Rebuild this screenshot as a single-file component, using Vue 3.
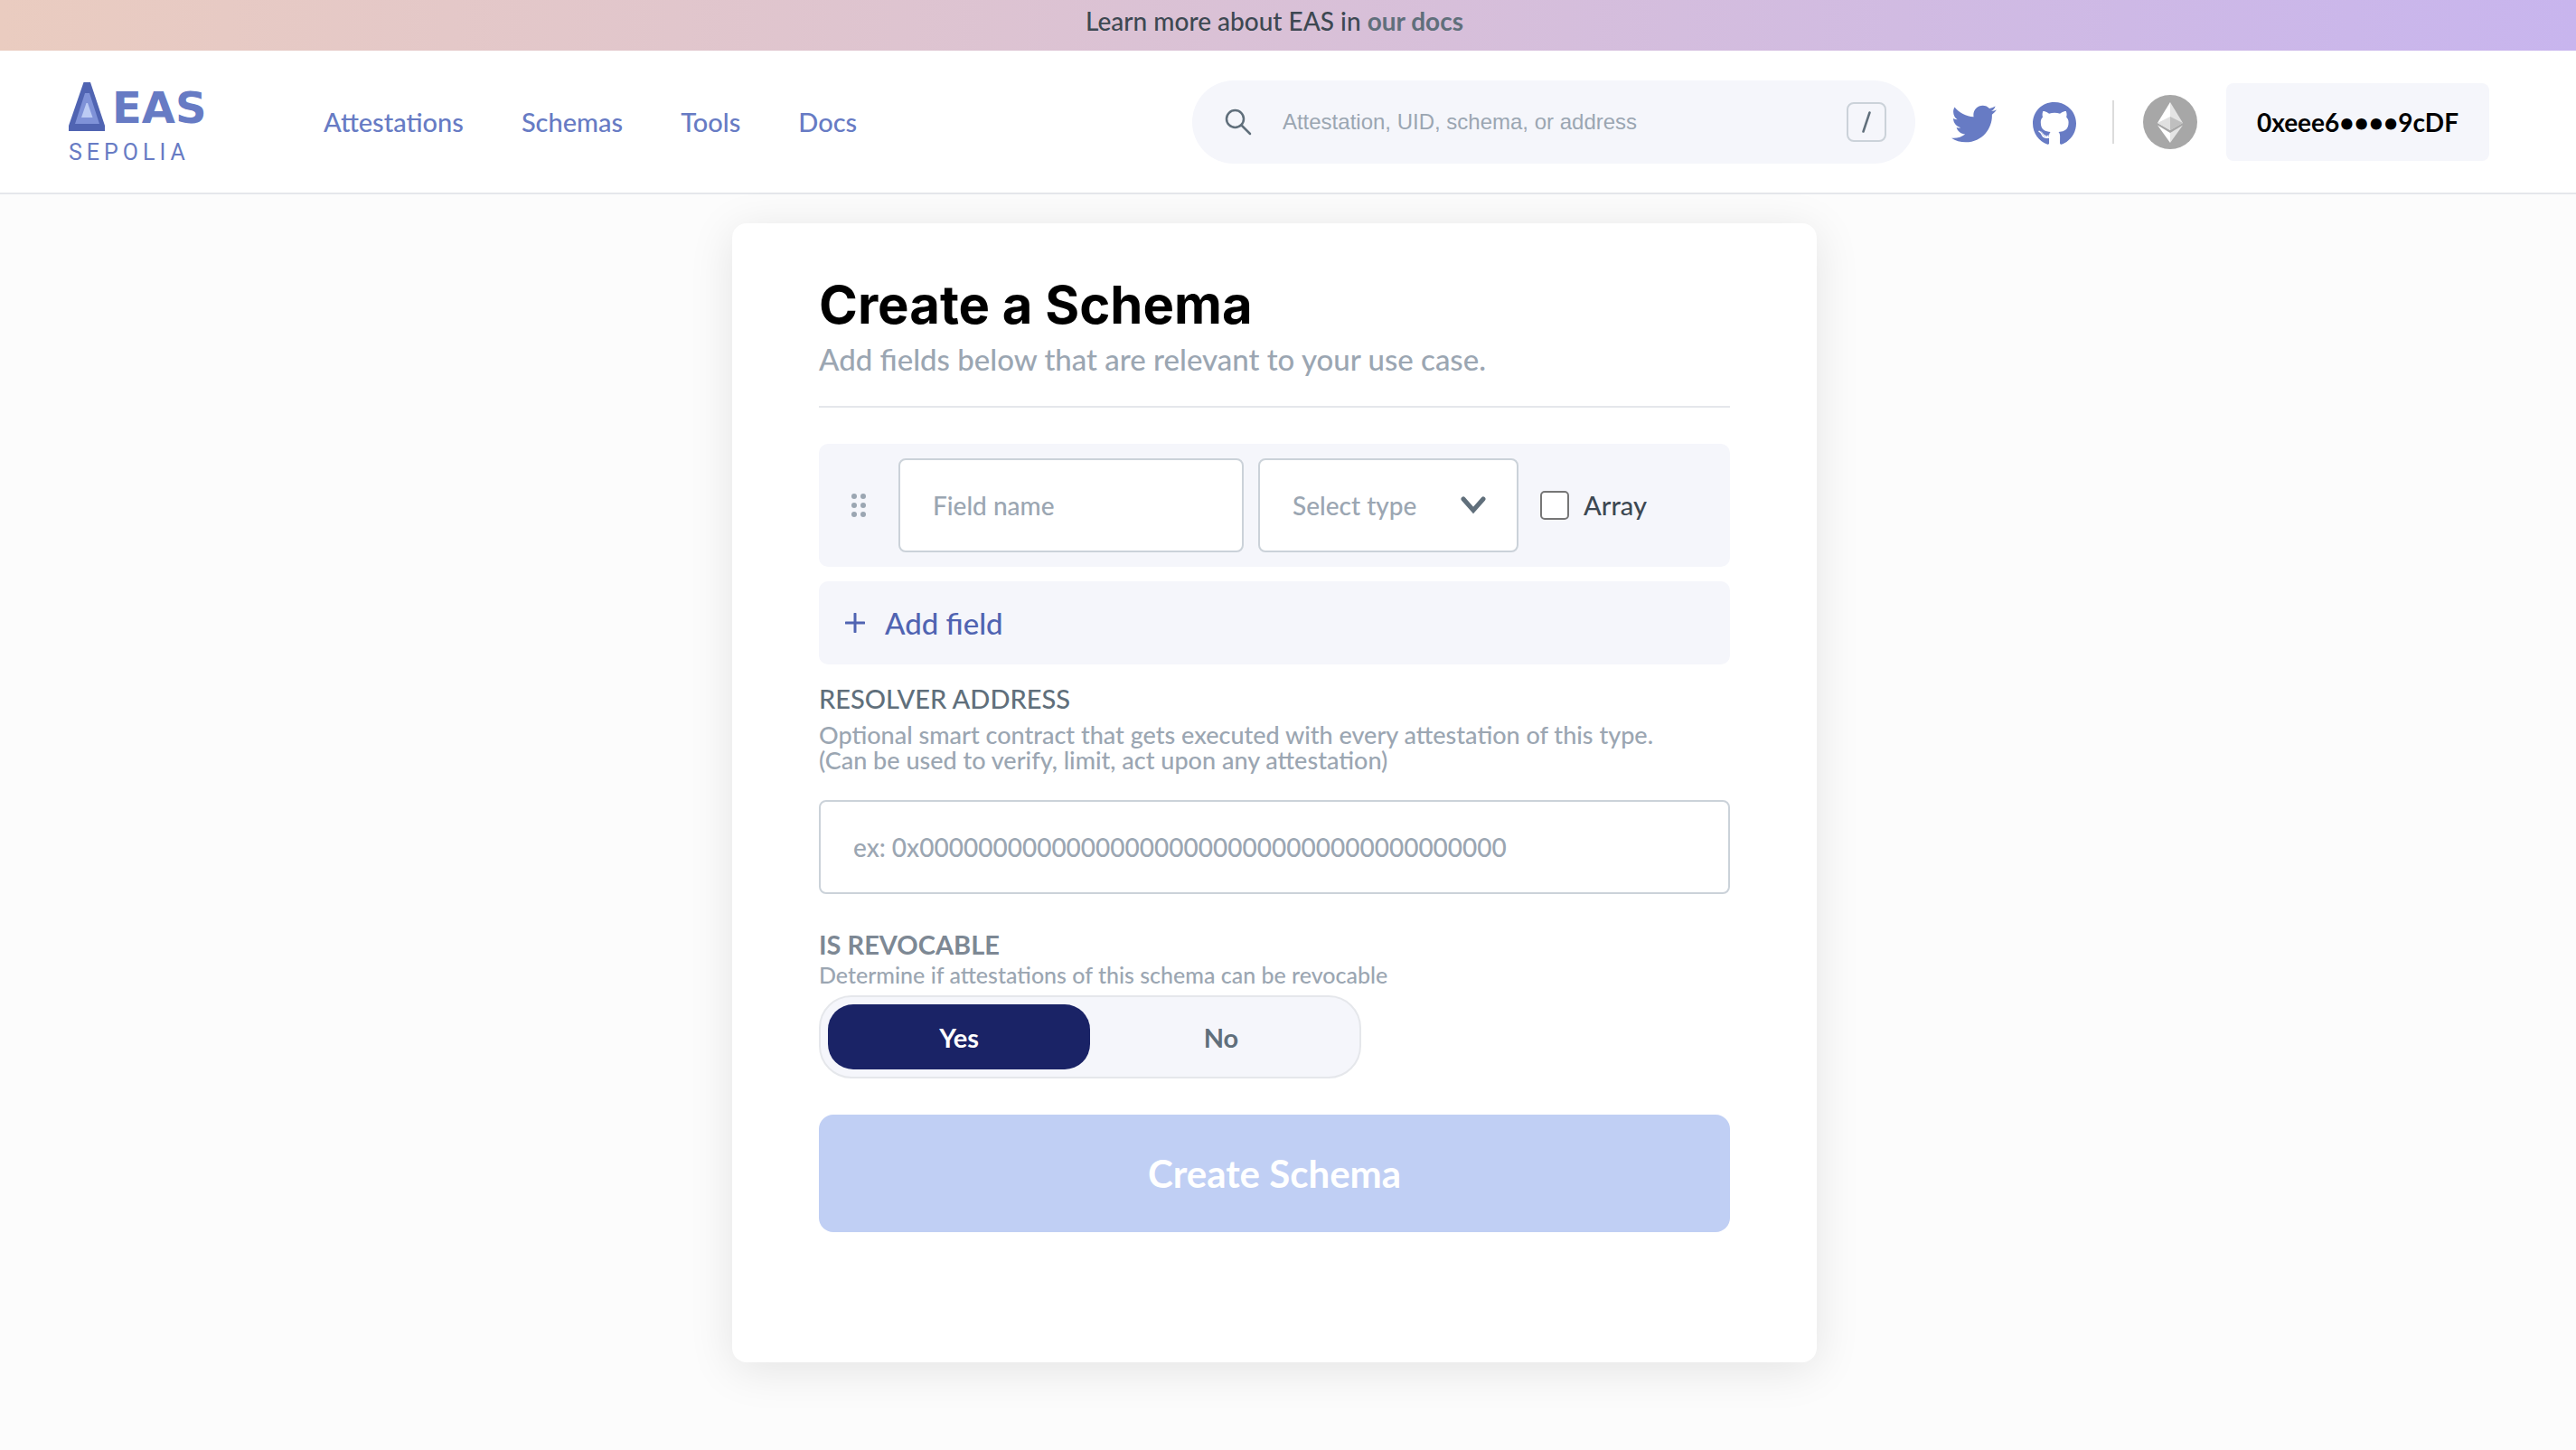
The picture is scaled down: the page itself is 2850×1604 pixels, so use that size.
<script setup>
import { ref } from 'vue'

const navLinks = ['Attestations', 'Schemas', 'Tools', 'Docs']
const fieldTypes = ['address', 'string', 'bool', 'bytes32', 'bytes', 'uint256']
const search = ref('')
const fieldName = ref('')
const fieldType = ref('')
const isArray = ref(false)
const resolver = ref('')
const revocable = ref(true)
</script>

<template>
  <div class="page">
    <div class="banner">
      <p>Learn more about EAS in <a href="#docs">our docs</a></p>
    </div>

    <header class="topbar">
      <a class="logo" href="#home">
        <span class="logo-row">
          <svg class="logo-mark" viewBox="0 0 40 54" aria-hidden="true">
            <path d="M16.500 0H24L40 48V54H0V48Z" fill="#5064b2" />
            <path d="M18 12H23L34 46H7L8 43Z" fill="#7f92d8" />
            <path d="M19.500 23H21L26.500 39H14Z" fill="#bccbf4" />
          </svg>
          <span class="logo-word">EAS</span>
        </span>
        <span class="logo-net">SEPOLIA</span>
      </a>

      <nav class="links">
        <a v-for="link in navLinks" :key="link" :href="'#' + link.toLowerCase()">{{ link }}</a>
      </nav>

      <div class="tools">
        <label class="search">
          <svg class="search-icon" viewBox="0 0 30 30" aria-hidden="true">
            <circle cx="11.500" cy="11.500" r="9.500" />
            <path d="M18.500 18.500L28 28" />
          </svg>
          <input v-model="search" type="text" placeholder="Attestation, UID, schema, or address" aria-label="Search" />
          <span class="key">
            <svg viewBox="0 0 10 24" aria-hidden="true"><path d="M8.500 1.500L1.500 22.500" /></svg>
          </span>
        </label>

        <a class="social" href="#twitter" aria-label="Twitter">
          <svg class="twitter" viewBox="0 0 512 512" aria-hidden="true">
            <path d="M459.37 151.716c.325 4.548.325 9.097.325 13.645 0 138.72-105.583 298.558-298.558 298.558-59.452 0-114.68-17.219-161.137-47.106 8.447.974 16.568 1.299 25.34 1.299 49.055 0 94.213-16.568 130.274-44.832-46.132-.975-84.792-31.188-98.112-72.772 6.498.974 12.995 1.624 19.818 1.624 9.421 0 18.843-1.3 27.614-3.573-48.081-9.747-84.143-51.98-84.143-102.985v-1.299c13.969 7.797 30.214 12.67 47.431 13.319-28.264-18.843-46.781-51.005-46.781-87.391 0-19.492 5.197-37.36 14.294-52.954 51.655 63.675 129.3 105.258 216.365 109.807-1.624-7.797-2.599-15.918-2.599-24.04 0-57.828 46.782-104.934 104.934-104.934 30.213 0 57.502 12.67 76.67 33.137 23.715-4.548 46.456-13.32 66.599-25.34-7.798 24.366-24.366 44.833-46.132 57.827 21.117-2.273 41.584-8.122 60.426-16.243-14.292 20.791-32.161 39.308-52.628 54.253z" />
          </svg>
        </a>
        <a class="social" href="#github" aria-label="GitHub">
          <svg class="github" viewBox="0 0 496 512" aria-hidden="true">
            <path d="M165.9 397.4c0 2-2.3 3.6-5.2 3.6-3.3.3-5.600-1.300-5.600-3.600 0-2 2.300-3.600 5.200-3.600 3-.3 5.600 1.300 5.600 3.600zm-31.100-4.500c-.7 2 1.300 4.300 4.300 4.900 2.600 1 5.600 0 6.200-2s-1.300-4.300-4.300-5.200c-2.600-.7-5.500.3-6.200 2.300zm44.200-1.700c-2.900.7-4.900 2.600-4.600 4.900.3 2 2.900 3.300 5.900 2.600 2.900-.7 4.900-2.600 4.600-4.600-.3-1.900-3-3.200-5.900-2.900zM244.800 8C106.100 8 0 113.300 0 252c0 110.900 69.800 205.800 169.500 239.200 12.800 2.300 17.300-5.600 17.300-12.100 0-6.200-.3-40.400-.3-61.400 0 0-70 15-84.700-29.800 0 0-11.400-29.100-27.800-36.600 0 0-22.900-15.700 1.600-15.400 0 0 24.900 2 38.600 25.800 21.900 38.600 58.600 27.500 72.900 20.900 2.300-16 8.800-27.100 16-33.700-55.900-6.200-112.300-14.300-112.300-110.500 0-27.500 7.600-41.300 23.600-58.900-2.600-6.500-11.100-33.300 2.600-67.900 20.900-6.500 69 27 69 27 20-5.600 41.500-8.500 62.800-8.500s42.800 2.900 62.800 8.500c0 0 48.100-33.600 69-27 13.700 34.700 5.200 61.400 2.600 67.900 16 17.700 25.800 31.500 25.800 58.900 0 96.500-58.900 104.200-114.800 110.500 9.200 7.900 17 22.900 17 46.400 0 33.700-.3 75.400-.3 83.600 0 6.500 4.600 14.400 17.300 12.100C428.200 457.800 496 362.900 496 252 496 113.300 383.500 8 244.800 8zM97.200 352.900c-1.300 1-1 3.300.7 5.200 1.600 1.600 3.900 2.300 5.200 1 1.300-1 1-3.300-.7-5.200-1.600-1.600-3.900-2.300-5.200-1zm-10.800-8.100c-.7 1.300.3 2.900 2.300 3.900 1.600 1 3.600.7 4.300-.7.7-1.300-.3-2.900-2.300-3.900-2-.6-3.600-.3-4.300.7zm32.400 35.600c-1.600 1.300-1 4.300 1.300 6.200 2.300 2.300 5.200 2.600 6.500 1 1.300-1.300.7-4.300-1.300-6.200-2.200-2.300-5.200-2.600-6.500-1zm-11.400-14.700c-1.600 1-1.600 3.600 0 5.900 1.600 2.300 4.300 3.300 5.600 2.300 1.600-1.300 1.600-3.900 0-6.200-1.400-2.300-4-3.300-5.600-2z" />
          </svg>
        </a>
        <span class="separator"></span>
        <button class="network" type="button" aria-label="Network">
          <svg viewBox="0 0 60 60" aria-hidden="true">
            <circle cx="30" cy="30" r="30" fill="#a7a7a7" />
            <path d="M30 8L16 31L30 39Z" fill="#ffffff" />
            <path d="M30 8L44 31L30 39Z" fill="#e4e4e4" />
            <path d="M30 24L16 31L30 39Z" fill="#e0e0e0" />
            <path d="M30 24L44 31L30 39Z" fill="#bfbfbf" />
            <path d="M16 33.500L30 42V53Z" fill="#ffffff" />
            <path d="M44 33.500L30 42V53Z" fill="#e4e4e4" />
          </svg>
        </button>
        <button class="wallet" type="button">0xeee6••••9cDF</button>
      </div>
    </header>

    <main class="content">
      <form class="card" @submit.prevent>
        <div class="intro">
          <h1>Create a Schema</h1>
          <p>Add fields below that are relevant to your use case.</p>
        </div>

        <div class="field-row">
          <svg class="grip" viewBox="0 0 16 26" aria-hidden="true">
            <circle cx="3" cy="3" r="3" /><circle cx="13" cy="3" r="3" />
            <circle cx="3" cy="13" r="3" /><circle cx="13" cy="13" r="3" />
            <circle cx="3" cy="23" r="3" /><circle cx="13" cy="23" r="3" />
          </svg>
          <input v-model="fieldName" class="box name" type="text" placeholder="Field name" aria-label="Field name" />
          <div class="select-wrap">
            <select v-model="fieldType" class="box type" aria-label="Field type">
              <option value="">Select type</option>
              <option v-for="t in fieldTypes" :key="t" :value="t">{{ t }}</option>
            </select>
            <svg class="chevron" viewBox="0 0 28 20" aria-hidden="true"><path d="M3 3L14 15.500L25 3" /></svg>
          </div>
          <label class="array">
            <input v-model="isArray" type="checkbox" />
            <span>Array</span>
          </label>
        </div>

        <button class="add" type="button">
          <svg viewBox="0 0 22 22" aria-hidden="true"><path d="M11 1V21M1 11H21" /></svg>
          <span>Add field</span>
        </button>

        <label class="label" for="resolver">RESOLVER ADDRESS</label>
        <p class="hint">
          Optional smart contract that gets executed with every attestation of this type.<br />
          (Can be used to verify, limit, act upon any attestation)
        </p>
        <input
          id="resolver"
          v-model="resolver"
          class="box resolver"
          type="text"
          placeholder="ex: 0x0000000000000000000000000000000000000000"
        />

        <h2 class="label strong">IS REVOCABLE</h2>
        <p class="note">Determine if attestations of this schema can be revocable</p>
        <div class="toggle">
          <button type="button" :class="{ on: revocable }" @click="revocable = true">Yes</button>
          <button type="button" :class="{ on: !revocable }" @click="revocable = false">No</button>
        </div>

        <button class="submit" type="submit">Create Schema</button>
      </form>
    </main>
  </div>
</template>

<style>
body {
  background: #fcfcfc;
}
</style>

<style scoped>
.page,
.page * {
  box-sizing: border-box;
}
.page {
  font-family: Lato, "Open Sans", sans-serif;
  font-weight: 500;
  color: #3d4852;
}
.page p,
.page h1,
.page h2 {
  margin: 0;
}
.page a {
  text-decoration: none;
}
.page button {
  border: 0;
  padding: 0;
  font-family: inherit;
  cursor: pointer;
}
.page input,
.page select {
  font-family: inherit;
  font-weight: 500;
}
svg {
  display: block;
  flex: none;
}

.banner {
  height: 56px;
  padding: 7px 30px 0 0;
  background: linear-gradient(90deg, #eaccc0, #c8b5ee);
  text-align: center;
  font-size: 28px;
  line-height: 32px;
}
.banner a {
  color: #606f7b;
  font-weight: 700;
}

.topbar {
  display: flex;
  align-items: center;
  height: 159px;
  padding: 0 96px 0 76px;
  background: #ffffff;
  border-bottom: 2px solid #e5e7eb;
}
.logo {
  display: flex;
  flex-direction: column;
  width: 282px;
  gap: 6px;
  padding-top: 6px;
  color: #677bc4;
}
.logo-row {
  display: flex;
  gap: 8px;
}
.logo-mark {
  width: 40px;
  height: 54px;
}
.logo-word {
  font: 700 48px/56px "DejaVu Sans", sans-serif;
}
.logo-net {
  font: 400 25px/32px Roboto, sans-serif;
  letter-spacing: 5px;
}
.links {
  display: flex;
  gap: 64px;
  font-size: 29px;
  line-height: 36px;
}
.links a {
  color: #677bc4;
}
.tools {
  display: flex;
  flex: 1;
  align-items: center;
  justify-content: flex-end;
}
.search {
  display: flex;
  align-items: center;
  width: 800px;
  height: 92px;
  padding: 0 32px 0 36px;
  margin-right: 40px;
  border-radius: 46px;
  background: #f5f6fb;
}
.search-icon {
  width: 30px;
  height: 30px;
  fill: none;
  stroke: #606f7b;
  stroke-width: 2.5;
  stroke-linecap: round;
}
.page .search input {
  flex: 1;
  min-width: 0;
  padding: 0 0 0 34px;
  border: 0;
  background: none;
  font: 400 24px/32px "Liberation Sans", sans-serif;
}
.page input::placeholder {
  color: #9ba6b2;
  opacity: 1;
}
.key {
  display: grid;
  place-items: center;
  width: 44px;
  height: 44px;
  border: 2px solid #cbd2d9;
  border-radius: 8px;
}
.key svg {
  width: 10px;
  height: 24px;
  fill: none;
  stroke: #606f7b;
  stroke-width: 2.5;
  stroke-linecap: round;
}
.social {
  padding-top: 4px;
  margin-right: 40px;
  fill: #677bc4;
}
.twitter {
  width: 50px;
  height: 50px;
}
.github {
  width: 48px;
  height: 50px;
}
.separator {
  width: 2px;
  height: 48px;
  margin-right: 32px;
  background: #dcdcdc;
}
.network {
  width: 60px;
  height: 60px;
  margin-right: 32px;
  background: none;
}
.network svg {
  width: 60px;
  height: 60px;
}
.page .wallet {
  padding: 25px 34px;
  border-radius: 8px;
  background: #f5f6fb;
  color: #000000;
  font-size: 28px;
  font-weight: 700;
  line-height: 36px;
}

.content {
  padding: 32px 30px 97px 0;
}
.card {
  display: flex;
  flex-direction: column;
  max-width: 1200px;
  margin: 0 auto;
  padding: 58px 96px 144px;
  border-radius: 16px;
  background: #ffffff;
  box-shadow: 0 8px 50px rgba(0, 0, 0, 0.1);
}
.intro {
  padding-bottom: 32px;
  border-bottom: 2px solid #e5e7eb;
  margin-bottom: 40px;
}
.intro h1 {
  color: #000000;
  font: 700 58px/64px Inter, sans-serif;
}
.intro p {
  padding-top: 8px;
  color: #9ba6b2;
  font-size: 33px;
  line-height: 40px;
}
.field-row {
  display: flex;
  align-items: center;
  gap: 16px;
  padding: 16px 92px 16px 36px;
  margin-bottom: 16px;
  border-radius: 10px;
  background: #f5f6fb;
}
.grip {
  width: 16px;
  height: 26px;
  margin-right: 20px;
  fill: #9ba6b2;
}
.page .box {
  height: 104px;
  padding: 0 36px;
  border: 2px solid #cbd2d9;
  border-radius: 8px;
  background: #ffffff;
  font-size: 28px;
}
.name {
  flex: 1;
  min-width: 0;
}
.select-wrap {
  position: relative;
  width: 288px;
}
.type {
  width: 100%;
  appearance: none;
  color: #9ba6b2;
}
.chevron {
  position: absolute;
  top: 42px;
  right: 36px;
  width: 28px;
  height: 20px;
  fill: none;
  stroke: #606f7b;
  stroke-width: 5;
  stroke-linecap: round;
  pointer-events: none;
}
.array {
  display: flex;
  align-items: center;
  gap: 16px;
  padding-left: 8px;
  font-size: 29px;
  line-height: 36px;
}
.array input {
  appearance: none;
  width: 32px;
  height: 32px;
  margin: 0;
  border: 2px solid #767676;
  border-radius: 5px;
  background: #ffffff;
}
.array input:checked {
  background: #1a2366;
}
.page .add {
  display: flex;
  align-items: center;
  gap: 22px;
  padding: 26px 29px;
  margin-bottom: 20px;
  border-radius: 10px;
  background: #f5f6fb;
  color: #5064b2;
  font-size: 33px;
  font-weight: 500;
  line-height: 40px;
}
.add svg {
  width: 22px;
  height: 22px;
  fill: none;
  stroke: #5064b2;
  stroke-width: 3;
  stroke-linecap: round;
}
.label {
  color: #606f7b;
  font-size: 29px;
  font-weight: 500;
  line-height: 36px;
}
.hint {
  padding-top: 8px;
  color: #9ba6b2;
  font-size: 27px;
  line-height: 28px;
}
.resolver {
  margin: 30px 0 38px;
}
.label.strong {
  color: #7d8894;
  font-weight: 700;
}
.note {
  color: #9ba6b2;
  font-size: 25px;
  line-height: 30px;
}
.toggle {
  display: flex;
  width: 600px;
  height: 92px;
  max-width: 100%;
  padding: 8px;
  margin: 8px 0 40px;
  border: 2px solid #e5e7eb;
  border-radius: 36px;
  background: #f5f6fb;
}
.page .toggle button {
  flex: 1;
  border-radius: 28px;
  background: none;
  color: #606f7b;
  font-size: 29px;
  font-weight: 700;
}
.page .toggle .on {
  background: #1a2366;
  color: #ffffff;
}
.page .submit {
  padding: 41px 0;
  border-radius: 16px;
  background: #c0cff4;
  color: #ffffff;
  font-size: 42px;
  font-weight: 700;
  line-height: 48px;
}
</style>
